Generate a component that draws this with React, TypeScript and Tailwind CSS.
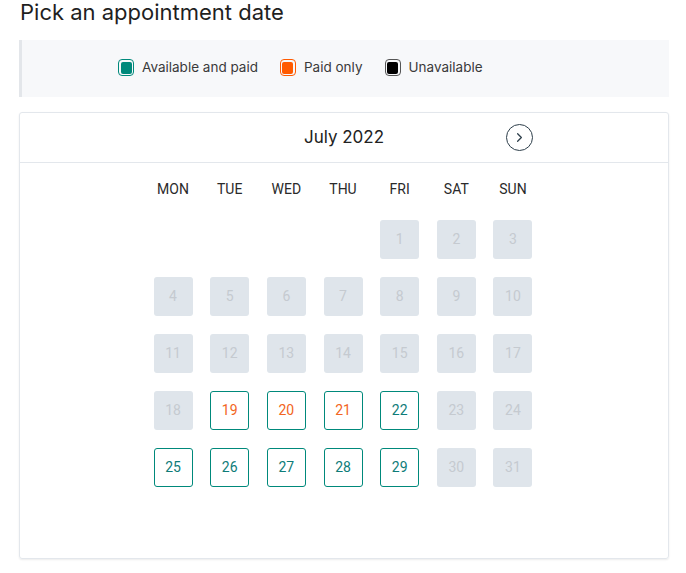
import { ChevronRight } from "lucide-react";

type DayState = "off" | "paid" | "both";

// July 2022 starts on a Friday
const days: { n: number; state: DayState }[] = Array.from({ length: 31 }, (_, i) => {
  const n = i + 1;
  let state: DayState = "off";
  if (n >= 19 && n <= 21) state = "paid";
  if (n === 22 || (n >= 25 && n <= 29)) state = "both";
  return { n, state };
});

const weekdays = ["MON", "TUE", "WED", "THU", "FRI", "SAT", "SUN"];

function LegendItem({ label, outer, inner }: { label: string; outer: string; inner: string }) {
  return (
    <div className="flex items-center gap-2">
      <span className={`flex h-[17px] w-[16px] rounded-[4px] border p-[1.5px] ${outer}`}>
        <span className={`block h-full w-full rounded-[2px] ${inner}`} />
      </span>
      <span className="text-[13.5px] text-[#3a3a3a]">{label}</span>
    </div>
  );
}

export default function App() {
  return (
    <div className="min-h-screen bg-white px-[19px] font-['Inter',sans-serif] text-[#222]">
      <h1 className="pl-[1px] text-[22px] leading-[24px] font-normal text-[#1f1f1f]">Pick an appointment date</h1>

      <div className="mt-[16px] flex h-[57px] w-[650px] items-center gap-[22px] border-l-[3px] border-[#e3e6ea] bg-[#f7f8fa] pb-[2px] pl-[96px]">
        <LegendItem label="Available and paid" outer="border-[#00897b]" inner="bg-[#00897b]" />
        <LegendItem label="Paid only" outer="border-[#ff5a00]" inner="bg-[#ff5a00]" />
        <LegendItem label="Unavailable" outer="border-[#555]" inner="bg-black" />
      </div>

      <div className="mt-[15px] h-[447px] w-[650px] rounded-[3px] border border-[#e3e7ec] shadow-[0_1px_2px_rgba(0,0,0,0.08)]">
        <div className="relative flex h-[50px] items-center justify-center border-b border-[#e3e7ec]">
          <span className="text-[17px] text-[#222]">July 2022</span>
          <button className="absolute left-[486px] top-[11px] flex h-[27px] w-[27px] items-center justify-center rounded-full border border-[#2d3e4a] text-[#2d3e4a]">
            <ChevronRight size={15} strokeWidth={2} />
          </button>
        </div>

        <div className="flex flex-col items-center pr-[2px] font-['Roboto',sans-serif]">
          <div className="mt-[16px] grid grid-cols-[repeat(7,39px)] gap-x-[17.67px]">
            {weekdays.map((w) => (
              <div key={w} className="flex h-[20px] items-center justify-center text-[14px] text-[#2a2a2a]">
                {w}
              </div>
            ))}
          </div>

          <div className="mt-[21px] grid grid-cols-[repeat(7,39px)] gap-x-[17.67px] gap-y-[18px]">
            {Array.from({ length: 4 }).map((_, i) => (
              <div key={`e${i}`} />
            ))}
            {days.map((d) => {
              if (d.state === "off") {
                return (
                  <div key={d.n} className="flex h-[39px] w-[39px] items-center justify-center rounded-[3px] bg-[#dfe5eb] text-[14px] text-[#c5cad0]">
                    {d.n}
                  </div>
                );
              }
              return (
                <div
                  key={d.n}
                  className={`flex h-[39px] w-[39px] items-center justify-center rounded-[3px] border border-[#00897b] bg-white text-[14px] ${
                    d.state === "paid" ? "text-[#f26522]" : "text-[#0e7c78]"
                  }`}
                >
                  {d.n}
                </div>
              );
            })}
          </div>
        </div>
      </div>
    </div>
  );
}
